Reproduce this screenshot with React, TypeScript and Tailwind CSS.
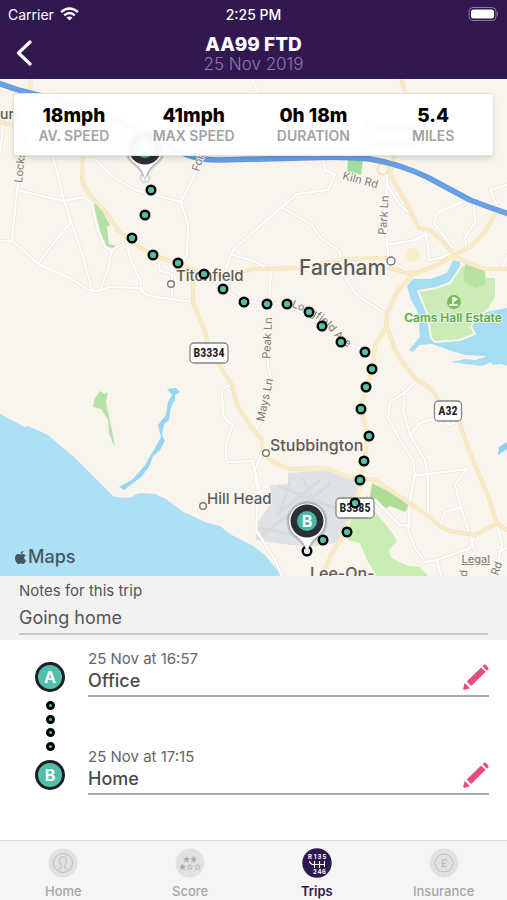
import { useState } from "react";
import { FaApple } from "react-icons/fa";

const majorRoads = [
  "M31 79 L30 93",
  "M83 150 L82 178 Q84 188 90 195 L105 211 L118 230 L133 243 L153 255 L178 264 L205 274 Q228 275 253 269 L300 268 L345 259 L385 258",
  "M193 272 L193 302 L205 332 L208 345 L218 363 L232 385 L237 405 L253 430 L261 438 L263 450 Q268 460 275 463 L290 469 L325 468 L345 476 L375 480 L400 497 L430 517 Q440 528 450 531 L475 535 L497 523 L507 530",
  "M388 268 L413 274 L435 266 L455 255 L470 247 L485 232 L496 212",
  "M390 175 L405 200 L419 228 L430 230 L443 242 L455 257 L470 264 L485 269 L507 269",
  "M413 274 L397 292 L387 313 L386 328 L375 345 L373 365 L368 385 L362 402 L363 417 L368 437 L364 462 L360 485 L355 505 L345 532 L331 555 L322 576",
  "M386 323 L395 350 L402 362 L415 378 L432 390 L445 410 L460 423 L465 440 L475 465 L488 496 L497 523",
  "M401 79 L405 92",
  "M396 150 L390 175",
  "M0 122 L14 125",
];

const minorRoads = [
  "M252 79 L258 93",
  "M24 155 L17 190 L12 241",
  "M0 241 L12 241 L20 247 L38 264 L70 278 L88 290 L98 291 L110 287 L140 288 L145 294 L155 297 L193 302",
  "M17 190 L64 201 L84 197 L92 204 L98 230 L105 247 L112 250 L130 240",
  "M52 155 L58 175 L64 201 L71 222 L82 253 L92 290",
  "M71 222 L52 245 L38 264",
  "M0 155 L3 125 L14 112",
  "M92 157 L115 178 L135 190 L181 202 L197 170 L200 155",
  "M181 202 L188 225 L187 255 L182 264",
  "M127 245 L130 258 L140 280 L142 292",
  "M112 250 L108 270 L100 290",
  "M158 258 L160 271 L172 274 L172 297",
  "M322 155 L325 170 L335 175 L328 190 L297 194 L253 232 L233 250 L226 268",
  "M233 255 L253 261 L271 270 L269 300 L268 365 L271 378 L262 412 L256 430",
  "M283 208 L312 225 L320 237 L340 252 L342 273 L355 293 L367 302 L384 313",
  "M223 289 L244 302 L287 304 L322 326 L341 342 L365 350 L372 350",
  "M387 185 L400 205 L415 218 L425 230 L428 245 L429 260 L440 258 L453 252",
  "M387 180 L385 215 L387 245 L415 240 L426 234",
  "M387 245 L389 260 L410 272",
  "M453 248 L434 223 L437 213 L462 202",
  "M474 205 L475 222 L465 238 L466 247",
  "M507 185 L490 190 L498 208",
  "M507 255 L502 269",
  "M232 385 Q222 387 222 392 L223 412 Q223 419 233 425 L227 440 Q224 460 228 462 L253 461 L258 495 L256 530 L275 560 L282 576",
  "M262 452 L255 470 L262 500",
  "M417 380 L405 392 L390 402 L388 418 L400 440 L413 460 L415 475 L410 500 L408 530 L415 548 L425 562 L437 560 L470 548 L475 535",
  "M405 392 L403 410 L410 435 L425 460 L428 478 L428 515",
  "M410 435 L420 423 L440 417 L450 425 L458 420",
  "M413 476 L467 469 L455 485 L460 505 L470 535 L474 550",
  "M440 525 L445 512 L460 508",
  "M497 525 L502 545 L495 576",
  "M375 500 L400 525 L410 526",
  "M507 548 L499 552",
  "M437 560 L441 576",
];

const motorway =
  "M-2 83 Q16 90 34 94 L100 110 Q150 140 187 155 Q200 160 220 160 L300 158 Q345 156 370 159 Q400 164 427 177 L470 200 Q488 207 509 214";

const tripPoints = [
  [151, 190], [145, 215], [132, 238], [153, 255], [178, 263], [204, 274],
  [223, 289], [244, 302], [267, 304], [287, 304], [309, 312], [322, 326],
  [341, 342], [365, 352], [372, 369], [366, 387], [361, 409], [369, 436],
  [364, 461], [360, 480], [355, 503], [347, 532], [323, 540],
];

const stats = [
  { value: "18mph", label: "AV. SPEED" },
  { value: "41mph", label: "MAX SPEED" },
  { value: "0h 18m", label: "DURATION" },
  { value: "5.4", label: "MILES" },
];

function Shield({ x, y, w, text }: { x: number; y: number; w: number; text: string }) {
  return (
    <g>
      <rect x={x - w / 2} y={y - 10} width={w} height="20" rx="4" fill="#fff" stroke="#858585" strokeWidth="1.3" />
      <text
        x={x}
        y={y + 4}
        textAnchor="middle"
        fill="#222"
        className="font-['Liberation_Sans_Narrow','Roboto_Condensed',sans-serif] text-[12px] font-bold"
      >
        {text}
      </text>
    </g>
  );
}

function Pin({ x, y, letter }: { x: number; y: number; letter: string }) {
  const shape = `M${x} ${y + 29} Q${x - 4} ${y + 20} ${x - 10} ${y + 16} A18.5 18.5 0 1 1 ${x + 10} ${y + 16} Q${x + 4} ${y + 20} ${x} ${y + 29}Z`;
  return (
    <g>
      <circle cx={x} cy={y + 30} r="4.3" fill="#fff" stroke={letter === "B" ? "#000" : "#ddd"} strokeWidth="2.4" />
      <path d={shape} fill="none" stroke="#000" strokeOpacity="0.15" strokeWidth="4" />
      <path d={shape} fill="#fff" stroke="#a5a5a5" strokeWidth="1" />
      <path d={`M${x - 5} ${y + 18} L${x} ${y + 30} L${x + 5} ${y + 18}Z`} fill="#fff" />
      <circle cx={x} cy={y} r="16.5" fill="#2c3034" />
      <circle cx={x} cy={y} r="10" fill="#46b8a3" />
      <text x={x} y={y + 6} textAnchor="middle" fill="#fff" className="text-[16px] font-bold">
        {letter}
      </text>
    </g>
  );
}

function TripMap() {
  return (
    <svg viewBox="0 79 507 497" className="block w-full" role="img" aria-label="Map of the trip">
      <rect y="79" width="507" height="497" fill="#f9f5ed" />
      <path d="M0 414 L25 427 L28 426 L48 435 L75 458 L113 496 Q122 499 132 497 Q136 493 142 493 L155 494 L166 499 L182 511 L205 522 L220 526 L230 534 L253 546 L265 555 L282 576 L0 576Z" fill="#ade0f4" />
      {/* airfield */}
      <path d="M288 473 L325 470 L345 477 L358 480 L357 498 L350 512 L350 530 L335 543 L318 546 L290 545 L256 540 L256 525 L272 502 L270 485 L288 484Z" fill="#dfe2e4" />
      <path d="M303 478 L325 528 M262 535 L330 484 M278 486 L345 512 M258 528 L300 536 M290 482 L280 512 L320 480" stroke="#d5dadd" strokeWidth="3" fill="none" />
      {/* parks */}
      <path d="M95 203 L100 207 L110 225 L107 227 L109 244 L117 246 L113 250 L106 248 L101 240 L98 225 L92 212Z" fill="#b5e2a8" />
      <path d="M100 391 L104 394 L108 392 L106 402 L109 417 L112 430 L115 447 L109 434 L108 420 L101 409 L93 407 L94 400Z" fill="#b5e2a8" />
      <path d="M348 160 h15 l-2 15 l-14 -4Z" fill="#a3dda0" />
      <path d="M372 483 L394 494 L409 505 L405 512 L390 506 L386 508 L370 497Z" fill="#aedd98" />
      <path d="M367 495 L373 510 L391 531 L397 541 L389 550 L391 558 L408 566 L420 567 L428 576 L377 576 L367 560 L360 543 L348 540 L348 529 L355 510Z" fill="#c8ecb1" />
      {/* lakes and streams */}
      <path d="M407 286 L413 279 L430 279 L447 273 L453 260 L460 262 L460 280 L480 290 L486 312 L507 308 L507 363 L493 365 L485 356 L465 355 L449 350 L432 344 L420 345 L412 352 L409 350 L420 337 L418 312 L411 300Z" fill="#a7ddf3" />
      <path d="M418 291 L436 288 L450 283 L462 265 L485 270 L487 277 L496 277 L496 297 L489 309 L475 320 L471 327 L475 334 L460 340 L435 342 L431 338 L427 313Z" fill="#cdebb6" stroke="#f6f8e8" strokeWidth="2" />
      <path d="M465 264 L485 270 L485 285 L475 288 L464 281Z" fill="#b6e2a2" />
      <path d="M167 389 L176 388 L180 392 L175 395 L175 400 L171 407 L169 420 L164 424 L162 435 L165 441 L160 450 L153 456 L149 467 L141 477 L124 490 L119 487 L133 479 L145 465 L155 448 L161 437 L158 425 L166 415 L168 402 L172 395Z" fill="#96d6ee" />
      <path d="M451 362 L466 359 L475 360 L485 357 L507 357 L507 366 L493 361 L482 366 L466 364Z" fill="#a7ddf3" />
      <path d="M498 455 L499 447 L507 442 L507 449Z" fill="#8dd2ee" />
      <circle cx="413" cy="255" r="7" fill="#faeecb" />

      <g fill="none" strokeLinejoin="round" strokeLinecap="round">
        {minorRoads.map((d) => (
          <path key={d} d={d} stroke="#e9e6e1" strokeWidth="3.5" />
        ))}
        {minorRoads.map((d) => (
          <path key={d} d={d} stroke="#fff" strokeWidth="2" />
        ))}
        {majorRoads.map((d) => (
          <path key={d} d={d} stroke="#f2e4c2" strokeWidth="4" />
        ))}
        {majorRoads.map((d) => (
          <path key={d} d={d} stroke="#fcecc4" strokeWidth="2.5" />
        ))}
        <circle cx="383" cy="169" r="5.5" stroke="#f9dfb4" strokeWidth="2" />
        <path d={motorway} stroke="#5f97df" strokeWidth="5.5" />
        <path d={motorway} stroke="#69a1e8" strokeWidth="4" />
      </g>

      {/* street names */}
      <g fill="#7b7977" stroke="#f9f5ed" strokeWidth="2" paintOrder="stroke" className="text-[11px]">
        <text transform="translate(22 183) rotate(-84)">Locks Rd</text>
        <text transform="translate(199 172) rotate(-72)">Fontley Rd</text>
        <text transform="translate(342 179) rotate(15)">Kiln Rd</text>
        <text transform="translate(386 235) rotate(-86)">Park Ln</text>
        <text transform="translate(270 359) rotate(-87)">Peak Ln</text>
        <text transform="translate(264 422) rotate(-78)">Mays Ln</text>
        <text transform="translate(467 577) rotate(-86)">d</text>
        <text transform="translate(498 576) rotate(-72)">Rd</text>
        <path id="avenue" d="M291 307 Q318 316 330 331 T354 350" fill="none" stroke="none" />
        <text>
          <textPath href="#avenue">Longfield Ave</textPath>
        </text>
      </g>

      {/* places */}
      <g fill="#5d5b59" stroke="#f9f5ed" strokeWidth="2" paintOrder="stroke" className="text-[15px] font-medium">
        <text x="0" y="119" className="text-[14px]">ury</text>
        <text x="365" y="132" className="text-[12px]">Fareham</text>
        <text x="365" y="148" className="text-[12px]">Common</text>
        <text x="176" y="281">Titchfield</text>
        <text x="299" y="275" className="text-[21px]">Fareham</text>
        <text x="270" y="451" className="text-[16px]">Stubbington</text>
        <text x="207" y="504">Hill Head</text>
        <text x="310" y="579" className="text-[16px]">Lee-On-</text>
      </g>
      <g fill="#fff" stroke="#777" strokeWidth="1.4">
        <circle cx="171" cy="284" r="3.3" />
        <circle cx="391" cy="261" r="4" />
        <circle cx="266" cy="453" r="3.3" />
        <circle cx="203" cy="506" r="3.3" />
      </g>
      <circle cx="454" cy="302" r="7" fill="#77bd5c" />
      <path d="M453 297 v8 M449 305 h9" stroke="#fff" strokeWidth="1.6" />
      <path d="M454 297 l4 2 l-4 3Z" fill="#fff" />
      <text x="453" y="322" textAnchor="middle" fill="#62a94d" stroke="#e6f5e4" strokeWidth="2" paintOrder="stroke" className="text-[12px] font-semibold">
        Cams Hall Estate
      </text>

      <Shield x={209} y={353} w={38} text="B3334" />
      <Shield x={448} y={411} w={27} text="A32" />
      <Shield x={355} y={508} w={38} text="B3385" />

      {tripPoints.map(([x, y]) => (
        <circle key={`${x}-${y}`} cx={x} cy={y} r="4.3" fill="#52bfaa" stroke="#000" strokeWidth="2.4" />
      ))}
      <Pin x={145} y={148} letter="A" />
      <Pin x={307} y={521} letter="B" />
    </svg>
  );
}

function Stop({ id, time, place }: { id: string; time: string; place: string }) {
  const [name, setName] = useState<string>(place);

  return (
    <div className="flex gap-[23px]">
      <div className="mt-[13px] flex size-[30px] shrink-0 items-center justify-center rounded-full border-[3px] border-[#1d2023] bg-[#52bfaa] text-[16px] font-bold text-white">
        {id}
      </div>
      <div className="flex h-[48px] grow items-end border-b-2 border-[#a9a9a9]">
        <div className="grow pb-[2px]">
          <label htmlFor={`stop-${id}`} className="block text-[15px] leading-[20px] text-[#666]">
            {time}
          </label>
          <input
            id={`stop-${id}`}
            value={name}
            onChange={(e) => setName(e.target.value)}
            className="block w-full bg-transparent text-[18px] leading-[24px] font-medium text-[#4a4a4a] outline-none"
          />
        </div>
        <button type="button" aria-label={`Edit ${place}`} className="mb-[5px]">
          <svg viewBox="0 0 76 76" className="size-[26px]" fill="#e84c7f">
            <path d="M2 75 Q0 74 1 70 L5 55 L20 71 L6 75Z M11 51 L53 10 L66 23 L24 64Z M57 6 L61 2 Q64 0 67 3 L74 11 Q76 14 74 16 L70 20Z" />
          </svg>
        </button>
      </div>
    </div>
  );
}

function HomeIcon() {
  return (
    <svg viewBox="0 0 30 30" className="size-[30px]" fill="none" stroke="#bcbcbc">
      <circle cx="15" cy="15" r="14.5" fill="#e1e1e1" stroke="none" />
      <circle cx="15" cy="15" r="9.5" />
      <path d="M11.5 11 Q12 8.5 15 9 Q18 8.5 18.5 11 Q18.5 16 16.5 18 L17 20 L20 21.5 M11.5 11 Q11.5 16 13.5 18 L13 20 L10 21.5" />
    </svg>
  );
}

function ScoreIcon() {
  const star = "M0 -2.8 L0.9 -0.9 L2.8 -0.8 L1.3 0.6 L1.8 2.6 L0 1.5 L-1.8 2.6 L-1.3 0.6 L-2.8 -0.8 L-0.9 -0.9Z";
  return (
    <svg viewBox="0 0 30 30" className="size-[30px]" fill="#aaa">
      <circle cx="15" cy="15" r="14.5" fill="#e1e1e1" />
      <path d={star} transform="translate(11.5 11.5)" stroke="#aaa" strokeWidth="0.6" />
      <path d={star} transform="translate(18.5 11.5)" stroke="#aaa" strokeWidth="0.6" />
      <path d={star} transform="translate(7.5 19)" stroke="#aaa" strokeWidth="0.6" />
      <path d={star} transform="translate(15 19)" fill="none" stroke="#b5b5b5" strokeWidth="0.8" />
      <path d={star} transform="translate(22.5 19)" fill="none" stroke="#b5b5b5" strokeWidth="0.8" />
    </svg>
  );
}

function TripsIcon() {
  return (
    <svg viewBox="0 0 30 30" className="size-[30px]">
      <circle cx="15" cy="15" r="14.7" fill="#2f1852" />
      <path d="M7 13.5 L10 16.5 H23 M12.5 13 V20 M17.5 13 V20 M22.5 13 V19" stroke="#fff" strokeWidth="1.1" fill="none" />
      <g fill="#fff" textAnchor="middle" className="text-[6px] font-bold">
        <text x="8" y="10.5">R</text>
        <text x="13" y="10.5">1</text>
        <text x="17.5" y="10.5">3</text>
        <text x="22.5" y="10.5">5</text>
        <text x="13" y="26">2</text>
        <text x="17.5" y="26">4</text>
        <text x="22" y="26">6</text>
      </g>
    </svg>
  );
}

function InsuranceIcon() {
  return (
    <svg viewBox="0 0 30 30" className="size-[30px]">
      <circle cx="15" cy="15" r="14.5" fill="#e1e1e1" />
      <circle cx="15" cy="15" r="9" fill="none" stroke="#bebebe" />
      <text x="15" y="19" textAnchor="middle" fill="#b5b5b5" className="text-[11px]">
        £
      </text>
    </svg>
  );
}

const tabs = [
  { name: "Home", icon: HomeIcon },
  { name: "Score", icon: ScoreIcon },
  { name: "Trips", icon: TripsIcon },
  { name: "Insurance", icon: InsuranceIcon },
];

export default function App() {
  const [notes, setNotes] = useState<string>("Going home");
  const [active, setActive] = useState<string>("Trips");

  return (
    <div className="flex min-h-screen flex-col bg-white font-['Inter','Liberation_Sans',sans-serif]">
      <header className="bg-[#321850] pb-[6px] text-white">
        <div className="grid h-7 grid-cols-3 items-center px-2 text-[14px]">
          <div className="flex items-center gap-[6px]">
            <span>Carrier</span>
            <svg viewBox="0 0 20 15" className="h-[14px] w-[19px]" fill="none" stroke="#fff" strokeWidth="2.6">
              <path d="M1 5.5 Q10 -2.5 19 5.5" />
              <path d="M4.3 9 Q10 4 15.7 9" />
              <path d="M10 14.5 L6.8 11.3 Q10 8.8 13.2 11.3Z" fill="#fff" stroke="none" />
            </svg>
          </div>
          <span className="text-center font-medium">2:25 PM</span>
          <svg viewBox="0 0 31 14" className="h-[14px] w-[31px] justify-self-end">
            <rect x="1" y="0.5" width="27" height="13" rx="4" fill="none" stroke="#8b7c9d" />
            <rect x="3" y="2.5" width="23" height="9" rx="2.5" fill="#fff" />
            <path d="M29 4.500 Q31 7 29 9.500Z" fill="#8b7c9d" />
          </svg>
        </div>
        <div className="grid grid-cols-[40px_1fr_40px] items-center">
          <button type="button" aria-label="Back" className="flex justify-center pt-1 pl-2">
            <svg viewBox="0 0 16 26" className="h-[26px] w-[16px]" fill="none" stroke="#fff" strokeWidth="3.2" strokeLinecap="round" strokeLinejoin="round">
              <path d="M14 2 L2.500 13 L14 24" />
            </svg>
          </button>
          <div className="pt-[7px] text-center">
            <h1 className="text-[19px] leading-[20px] font-extrabold">AA99 FTD</h1>
            <p className="text-[17px] leading-[18px] font-light text-[#8e78ad]">25 Nov 2019</p>
          </div>
        </div>
      </header>

      <main className="grow">
        <section className="relative">
          <TripMap />
          <dl className="absolute inset-x-[13px] top-[14px] grid grid-cols-4 rounded-[3px] border border-[#e4e2de] bg-white/97 pt-[11px] pb-[11px] text-center shadow-md">
            {stats.map((s) => (
              <div key={s.label} className="flex flex-col-reverse">
                <dt className="text-[14px] leading-[17px] font-semibold text-[#a3a3a5]">{s.label}</dt>
                <dd className="text-[19px] leading-[22px] font-extrabold text-black">{s.value}</dd>
              </div>
            ))}
          </dl>
          <p className="absolute bottom-[7px] left-[13px] flex items-center text-[18px] leading-[24px] font-medium text-[#445863]">
            <FaApple className="size-[15px]" />
            Maps
          </p>
          <a href="#legal" className="absolute right-[17px] bottom-[10px] text-[11px] leading-[14px] font-medium text-[#858380] underline">
            Legal
          </a>
        </section>

        <section className="bg-[#f2f2f2] px-[19px] pt-[5px] pb-[5px]">
          <label htmlFor="notes" className="block text-[15px] leading-[20px] text-[#555]">
            Notes for this trip
          </label>
          <input
            id="notes"
            value={notes}
            onChange={(e) => setNotes(e.target.value)}
            className="block h-[34px] w-full border-b-2 border-[#c6c6c6] bg-transparent text-[18px] text-[#555] outline-none"
          />
        </section>

        <section className="pt-[9px] pr-[18px] pb-[44px] pl-[35px]">
          <Stop id="A" time="25 Nov at 16:57" place="Office" />
          <div className="-mb-1 flex h-[54px] w-[30px] flex-col items-center justify-between pt-[4px]">
            {[0, 1, 2, 3].map((i) => (
              <span key={i} className="size-[9px] rounded-full border-[3px] border-black bg-[#52bfaa]" />
            ))}
          </div>
          <Stop id="B" time="25 Nov at 17:15" place="Home" />
        </section>
      </main>

      <nav className="grid grid-cols-4 border-t border-[#dcdcdc] bg-[#f5f5f5] pt-[7px] pb-px">
        {tabs.map(({ name, icon: Icon }) => (
          <button key={name} type="button" onClick={() => setActive(name)} className="flex flex-col items-center gap-[5px]">
            <Icon />
            <span className={active === name ? "text-[13px] leading-[16px] font-semibold text-[#2f1852]" : "text-[13px] leading-[16px] font-medium text-[#a5a5a5]"}>
              {name}
            </span>
          </button>
        ))}
      </nav>
    </div>
  );
}
